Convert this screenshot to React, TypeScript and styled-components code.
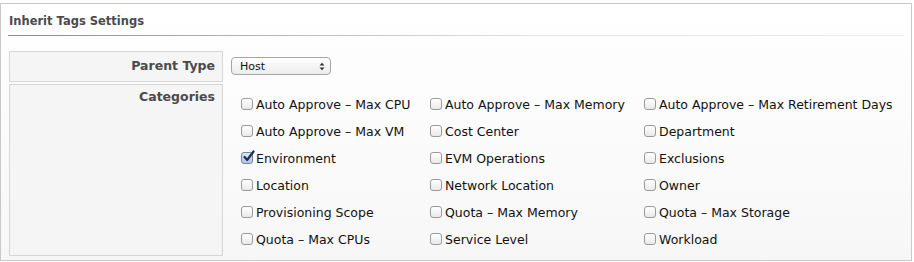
import styled, { createGlobalStyle } from "styled-components";

const GlobalStyle = createGlobalStyle`
  body {
    margin: 0;
    background: #ffffff;
    font-family: "DejaVu Sans", "Liberation Sans", sans-serif;
  }
`;

const Panel = styled.div`
  margin-top: 3px;
  width: 910px;
  height: 256px;
  border: 1px solid #c9c9c9;
  background: linear-gradient(#ffffff, #f7f7f7);
  box-sizing: content-box;
`;

const Title = styled.h3`
  margin: 0 7px 0 7px;
  padding: 11px 0 7px 1px;
  font-size: 11.5px;
  line-height: 13px;
  font-weight: bold;
  color: #4b4b4b;
  border-bottom: 1px solid transparent;
  border-image: linear-gradient(to right, #8a8a8a, #e6e6e6 60%, #ececec) 1;
`;

const Form = styled.div`
  display: grid;
  grid-template-columns: 214px 1fr;
  gap: 2px;
  margin: 15px 0 0 8px;
`;

const LabelCell = styled.div<{ $height: number; $top: number }>`
  height: ${(p) => p.$height}px;
  border: 1px solid #d6d6d6;
  background: #f5f5f5;
  box-sizing: border-box;
  text-align: right;
  padding: ${(p) => p.$top}px 7px 0 0;
  font-size: 12.5px;
  line-height: 15px;
  font-weight: bold;
  color: #4a4a4a;
`;

const ValueCell = styled.div<{ $top: number }>`
  padding: ${(p) => p.$top}px 0 0 6px;
`;

const Select = styled.div`
  width: 100px;
  height: 18px;
  box-sizing: border-box;
  border: 1px solid #a5a5a5;
  border-radius: 4px;
  background: linear-gradient(#ffffff, #ececec);
  display: flex;
  align-items: center;
  justify-content: space-between;
  padding: 0 5px 0 8px;
  font-size: 11px;
  color: #111;
`;

const Arrows = styled.svg`
  width: 6px;
  height: 9px;
`;

const Grid = styled.div`
  display: grid;
  grid-template-columns: 189px 214px 1fr;
  row-gap: 11px;
  padding-left: 10px;
`;

const Item = styled.label`
  display: flex;
  align-items: center;
  gap: 3px;
  height: 16px;
  font-size: 12.5px;
  color: #111;
  white-space: nowrap;
`;

const Box = styled.span<{ $checked?: boolean }>`
  position: relative;
  width: 12px;
  height: 12px;
  box-sizing: border-box;
  border: 1px solid ${(p) => (p.$checked ? "#6f86a8" : "#9a9a9a")};
  border-radius: 3px;
  background: ${(p) =>
    p.$checked
      ? "linear-gradient(#dbe7f7, #aec7ea)"
      : "linear-gradient(#ffffff, #e9e9e9)"};
  flex: none;
`;

const Check = styled.svg`
  position: absolute;
  left: 0px;
  top: -3px;
  width: 13px;
  height: 13px;
`;

const categories = [
  "Auto Approve - Max CPU",
  "Auto Approve - Max Memory",
  "Auto Approve - Max Retirement Days",
  "Auto Approve - Max VM",
  "Cost Center",
  "Department",
  "Environment",
  "EVM Operations",
  "Exclusions",
  "Location",
  "Network Location",
  "Owner",
  "Provisioning Scope",
  "Quota - Max Memory",
  "Quota - Max Storage",
  "Quota - Max CPUs",
  "Service Level",
  "Workload",
];

const checked = ["Environment"];

export default function App() {
  return (
    <>
      <GlobalStyle />
      <Panel>
        <Title>Inherit Tags Settings</Title>
        <Form>
          <LabelCell $height={31} $top={6}>
            Parent Type
          </LabelCell>
          <ValueCell $top={6}>
            <Select>
              <span>Host</span>
              <Arrows viewBox="0 0 6 9">
                <path d="M0.5 3.5 L3 0.8 L5.5 3.5 Z" fill="#333" />
                <path d="M0.5 5.5 L3 8.2 L5.5 5.5 Z" fill="#333" />
              </Arrows>
            </Select>
          </ValueCell>
          <LabelCell $height={172} $top={4}>
            Categories
          </LabelCell>
          <ValueCell $top={12}>
            <Grid>
              {categories.map((c) => (
                <Item key={c}>
                  <Box $checked={checked.includes(c)}>
                    {checked.includes(c) && (
                      <Check viewBox="0 0 13 13">
                        <path
                          d="M2.5 7 L5.2 10 L11.5 1.5"
                          fill="none"
                          stroke="#1c2f55"
                          strokeWidth="2.2"
                          strokeLinecap="round"
                          strokeLinejoin="round"
                        />
                      </Check>
                    )}
                  </Box>
                  {c.replace(/ - /g, " – ")}
                </Item>
              ))}
            </Grid>
          </ValueCell>
        </Form>
      </Panel>
    </>
  );
}
